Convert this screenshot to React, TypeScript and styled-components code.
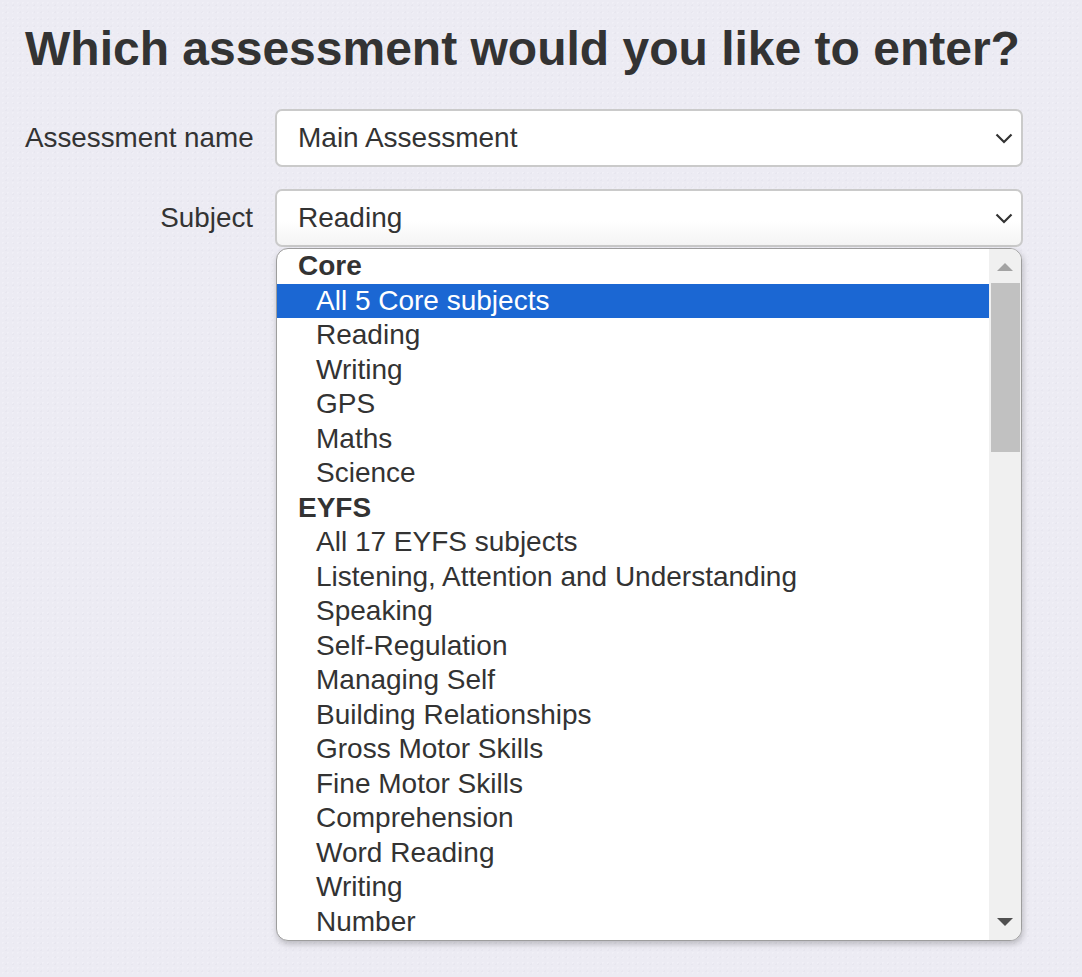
import styled, { createGlobalStyle } from "styled-components";

const GlobalStyle = createGlobalStyle`
  html, body {
    margin: 0;
    padding: 0;
    background-color: #ecebf3;
    background-image:
      radial-gradient(rgba(255, 255, 255, 0.22) 1px, transparent 1px),
      radial-gradient(rgba(200, 200, 212, 0.12) 1px, transparent 1px);
    background-size: 5px 5px, 7px 7px;
    background-position: 0 0, 3px 2px;
    font-family: "Liberation Sans", Arial, sans-serif;
    color: #333;
  }
  #root {
    min-height: 977px;
  }
`;

interface IGroup {
  label: string;
  options: string[];
}

const groups: IGroup[] = [
  {
    label: "Core",
    options: ["All 5 Core subjects", "Reading", "Writing", "GPS", "Maths", "Science"],
  },
  {
    label: "EYFS",
    options: [
      "All 17 EYFS subjects",
      "Listening, Attention and Understanding",
      "Speaking",
      "Self-Regulation",
      "Managing Self",
      "Building Relationships",
      "Gross Motor Skills",
      "Fine Motor Skills",
      "Comprehension",
      "Word Reading",
      "Writing",
      "Number",
    ],
  },
];

const selected = "All 5 Core subjects";

function Chevron(): JSX.Element {
  return (
    <svg width="18" height="11" viewBox="0 0 18 11">
      <path d="M1.5 1.5 L9 9 L16.5 1.5" fill="none" stroke="#333" strokeWidth="2.2" />
    </svg>
  );
}

function App(): JSX.Element {
  return (
    <>
      <GlobalStyle />
      <Page>
        <Heading>Which assessment would you like to enter?</Heading>
        <Form>
          <Label>Assessment name</Label>
          <SelectBox>
            <SelectValue>Main Assessment</SelectValue>
            <Chevron />
          </SelectBox>

          <Label>Subject</Label>
          <SelectWrap>
            <SelectBox $open>
              <SelectValue>Reading</SelectValue>
              <Chevron />
            </SelectBox>
            <ListBox>
              <OptionList>
                {groups.map((group) => (
                  <div key={group.label}>
                    <GroupLabel>{group.label}</GroupLabel>
                    {group.options.map((opt) => (
                      <Option key={group.label + opt} $active={opt === selected}>
                        {opt}
                      </Option>
                    ))}
                  </div>
                ))}
              </OptionList>
              <ScrollBar>
                <ScrollButton>
                  <Arrow $up />
                </ScrollButton>
                <Thumb />
                <Track />
                <ScrollButton>
                  <Arrow />
                </ScrollButton>
              </ScrollBar>
            </ListBox>
          </SelectWrap>
        </Form>
      </Page>
    </>
  );
}

export default App;

const Page = styled.div`
  padding: 22px 0 0 25px;
`;

const Heading = styled.h1`
  margin: 0 0 34px;
  font-size: 48px;
  line-height: 53px;
  font-weight: bold;
  color: #333;
  white-space: nowrap;
`;

const Form = styled.div`
  display: grid;
  grid-template-columns: 228px 748px;
  column-gap: 22px;
  row-gap: 22px;
  align-items: center;
`;

const Label = styled.label`
  font-size: 27.8px;
  text-align: right;
  white-space: nowrap;
  color: #333;
`;

const SelectWrap = styled.div`
  position: relative;
`;

const SelectBox = styled.div<{ $open?: boolean }>`
  box-sizing: border-box;
  height: 58px;
  display: flex;
  align-items: center;
  justify-content: space-between;
  padding: 0 8px 0 21px;
  border: 2px solid #cacaca;
  border-radius: 7px;
  background: ${(p) => (p.$open ? "linear-gradient(to bottom, #fff 55%, #f4f4f4)" : "#fff")};
  font-size: 28px;
  color: #333;
`;

const SelectValue = styled.span`
  white-space: nowrap;
`;

const ListBox = styled.div`
  position: absolute;
  top: calc(100% + 1px);
  left: 1px;
  right: 1px;
  height: 693px;
  box-sizing: border-box;
  display: flex;
  border: 1.5px solid #9d9d9d;
  border-radius: 12px;
  background: #fff;
  overflow: hidden;
  box-shadow: 1px 3px 6px rgba(0, 0, 0, 0.22);
  z-index: 2;
`;

const OptionList = styled.div`
  flex: 1;
  overflow: hidden;
`;

const GroupLabel = styled.div`
  font-size: 28px;
  line-height: 34.5px;
  font-weight: bold;
  padding-left: 21px;
  color: #333;
`;

const Option = styled.div<{ $active?: boolean }>`
  font-size: 28px;
  line-height: 34.5px;
  padding-left: 39px;
  white-space: nowrap;
  color: ${(p) => (p.$active ? "#fff" : "#333")};
  background: ${(p) => (p.$active ? "#1b67d3" : "transparent")};
`;

const ScrollBar = styled.div`
  width: 32px;
  background: #f0f0f0;
  display: flex;
  flex-direction: column;
`;

const ScrollButton = styled.div`
  height: 34px;
  display: flex;
  align-items: center;
  justify-content: center;
  flex-shrink: 0;
`;

const Arrow = styled.div<{ $up?: boolean }>`
  width: 0;
  height: 0;
  border-left: 8px solid transparent;
  border-right: 8px solid transparent;
  ${(p) =>
    p.$up
      ? "border-bottom: 8px solid #a3a3a3; margin-top: 2px;"
      : "border-top: 8px solid #505050; margin-bottom: 2px;"}
`;

const Thumb = styled.div`
  height: 169px;
  margin: 0 1px 0 2px;
  background: #c1c1c1;
  flex-shrink: 0;
`;

const Track = styled.div`
  flex: 1;
`;
